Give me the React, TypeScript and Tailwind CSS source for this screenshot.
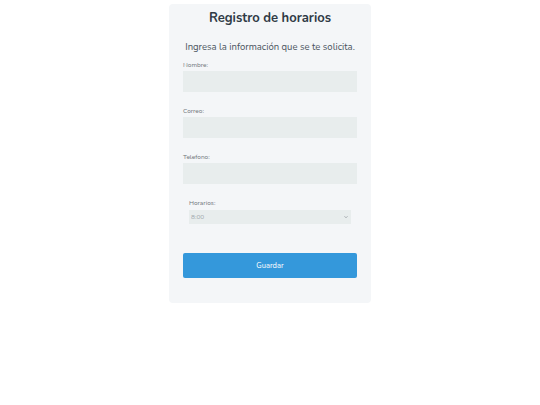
import { useState } from "react";

export default function App() {
  const [horario, setHorario] = useState("8:00");

  return (
    <div className="min-h-[405px] w-full bg-white flex justify-center" style={{ fontFamily: "'Nunito', 'Noto Sans', sans-serif" }}>
      <div className="mt-[4px] w-[202px] h-[299px] rounded bg-[#f4f6f8] px-[14px] flex flex-col">
        <h1 className="mt-[1px] text-center text-[13px] leading-[26px] font-bold text-[#2f3a45]">Registro de horarios</h1>
        <p className="mt-[9px] text-center text-[9.5px] leading-[14px] text-[#4a545e] whitespace-nowrap">
          Ingresa la información que se te solicita.
        </p>

        <label className="mt-[6px] text-[6.5px] leading-[10px] text-[#6f757a]">Nombre:</label>
        <input className="mt-[1px] h-[21px] w-full bg-[#e8eded] outline-none" />

        <label className="mt-[14px] text-[6.5px] leading-[10px] text-[#6f757a]">Correo:</label>
        <input className="mt-[1px] h-[21px] w-full bg-[#e8eded] outline-none" />

        <label className="mt-[14px] text-[6.5px] leading-[10px] text-[#6f757a]">Telefono:</label>
        <input className="mt-[1px] h-[21px] w-full bg-[#e8eded] outline-none" />

        <div className="mt-[14px] px-[6px] flex flex-col">
          <label className="text-[6.5px] leading-[10px] text-[#6f757a]">Horarios:</label>
          <div className="relative mt-[2px] h-[14px]">
            <select
              value={horario}
              onChange={(e) => setHorario(e.target.value)}
              className="block appearance-none h-[14px] w-full bg-[#e8eded] text-[6.5px] leading-[14px] text-[#a3aaaf] pl-[2px] outline-none"
            >
              <option>8:00</option>
              <option>9:00</option>
              <option>10:00</option>
            </select>
            <svg className="absolute right-[3px] top-[5px] w-[4px] h-[4px]" viewBox="0 0 8 8" fill="none">
              <path d="M1 2.5 L4 5.5 L7 2.5" stroke="#8a9096" strokeWidth="1.4" />
            </svg>
          </div>
        </div>

        <button className="mt-[29px] h-[25px] w-full rounded-[2px] bg-[#3498db] text-white text-[7.5px]">
          Guardar
        </button>
      </div>
    </div>
  );
}
